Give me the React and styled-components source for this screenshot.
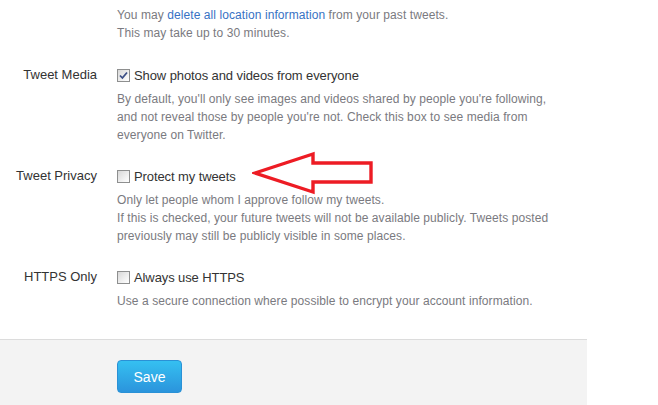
import React from "react";
import styled, { createGlobalStyle } from "styled-components";

const GlobalStyle = createGlobalStyle`
  html, body {
    margin: 0;
    padding: 0;
    background: #fff;
  }
  body {
    font-family: "Liberation Sans", Arial, sans-serif;
  }
`;

const settings = [
  {
    label: "Tweet Media",
    text: "Show photos and videos from everyone",
    checked: true,
    help: [
      "By default, you'll only see images and videos shared by people you're following, and not reveal those by people you're not. Check this box to see media from everyone on Twitter.",
    ],
  },
  {
    label: "Tweet Privacy",
    text: "Protect my tweets",
    checked: false,
    help: [
      "Only let people whom I approve follow my tweets.",
      "If this is checked, your future tweets will not be available publicly. Tweets posted previously may still be publicly visible in some places.",
    ],
  },
  {
    label: "HTTPS Only",
    text: "Always use HTTPS",
    checked: false,
    help: ["Use a secure connection where possible to encrypt your account information."],
  },
];

const App = () => {
  return (
    <>
      <GlobalStyle />
      <Page>
        <Section $gap="23px">
          <Label />
          <Controls>
            <Help $first>
              You may <Link href="#">delete all location information</Link> from your past tweets.
              <br />
              This may take up to 30 minutes.
            </Help>
          </Controls>
        </Section>

        {settings.map((s, i) => (
          <Section key={s.label} $gap={i === settings.length - 1 ? "29px" : "22px"}>
            <Label>{s.label}</Label>
            <Controls>
              <CheckRow>
                <Box>
                  {s.checked && (
                    <svg width="9" height="9" viewBox="0 0 9 9">
                      <path d="M1 4.5 L3.4 7 L8 1.5" fill="none" stroke="#3c4f86" strokeWidth="1.8" />
                    </svg>
                  )}
                </Box>
                <CheckText>{s.text}</CheckText>
              </CheckRow>
              <Help>
                {s.help.map((line, j) => (
                  <React.Fragment key={j}>
                    {j > 0 && <br />}
                    {line}
                  </React.Fragment>
                ))}
              </Help>
            </Controls>
          </Section>
        ))}

        <Footer>
          <SaveButton>Save</SaveButton>
        </Footer>

        <Arrow width="130" height="50" viewBox="0 0 130 50">
          <polygon
            points="3,24 61,5 61,14 119,14 119,33 61,33 61,43"
            fill="none"
            stroke="#ed1c24"
            strokeWidth="3.4"
          />
        </Arrow>
      </Page>
    </>
  );
};

export default App;

// Styled components
const Page = styled.div`
  position: relative;
  width: 658px;
  height: 405px;
  overflow: hidden;
  padding-top: 6px;
  box-sizing: border-box;
`;

const Section = styled.div`
  display: grid;
  grid-template-columns: 97px 440px;
  column-gap: 20px;
  margin-bottom: ${(p) => p.$gap};
`;

const Label = styled.div`
  text-align: right;
  font-size: 13px;
  line-height: 20px;
  color: #333;
`;

const Controls = styled.div`
  display: flex;
  flex-direction: column;
`;

const CheckRow = styled.label`
  display: flex;
  align-items: center;
  height: 20px;
  gap: 4px;
`;

const Box = styled.span`
  width: 11px;
  height: 11px;
  border: 1px solid #8e8f8f;
  background: linear-gradient(135deg, #d8d8d8 0%, #f4f4f4 70%, #fff 100%);
  display: flex;
  align-items: center;
  justify-content: center;
`;

const CheckText = styled.span`
  font-size: 13px;
  color: #333;
  letter-spacing: -0.1px;
`;

const Help = styled.p`
  margin: ${(p) => (p.$first ? "0" : "5px 0 0")};
  font-size: 12px;
  line-height: 18px;
  letter-spacing: 0.08px;
  color: #7a7a80;
`;

const Link = styled.a`
  color: #3772c4;
  text-decoration: none;
`;

const Footer = styled.div`
  width: 587px;
  height: 66px;
  box-sizing: border-box;
  border-top: 1px solid #dcdcdc;
  background: #f3f3f3;
  padding: 20px 0 0 117px;
`;

const SaveButton = styled.button`
  width: 65px;
  height: 33px;
  border: 1px solid #2a91d6;
  border-radius: 4px;
  background: linear-gradient(#35c0f1, #2b94dc);
  color: #fff;
  font-family: "Liberation Sans", Arial, sans-serif;
  font-size: 14px;
  padding: 0;
`;

const Arrow = styled.svg`
  position: absolute;
  left: 252px;
  top: 149px;
`;
